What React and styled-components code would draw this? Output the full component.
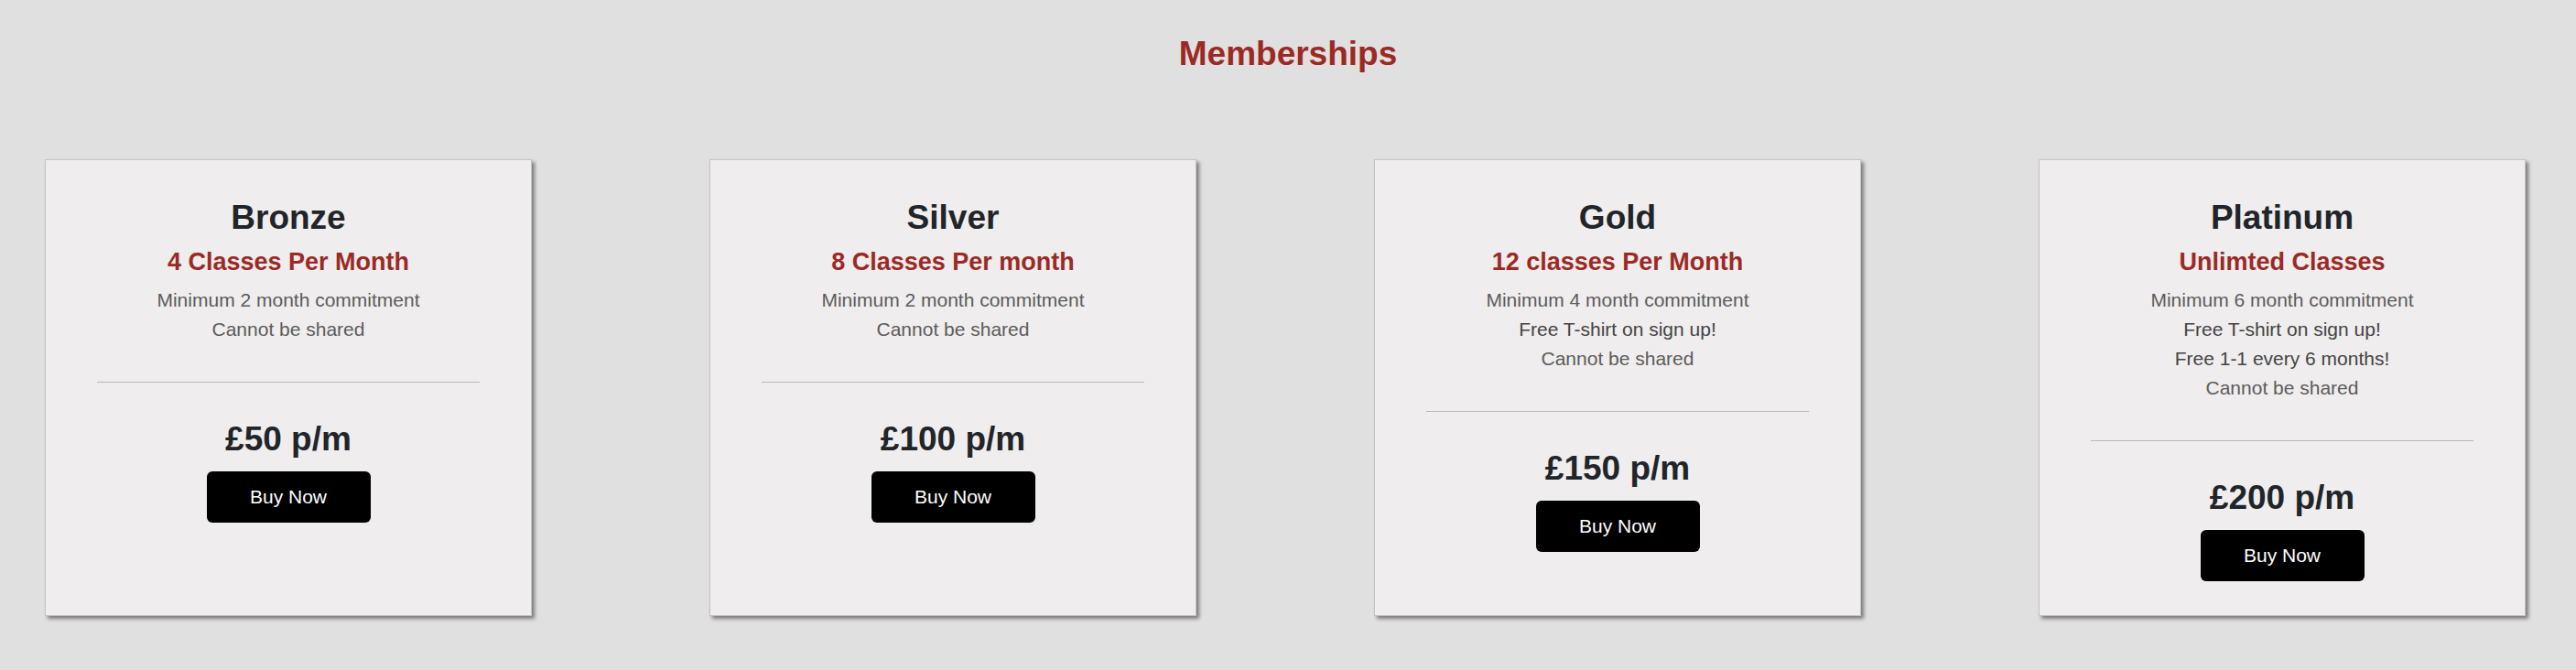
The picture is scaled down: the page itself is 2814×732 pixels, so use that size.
import React from "react";
import styled, { createGlobalStyle } from "styled-components";

const plans = [
  {
    name: "Bronze",
    classes: "4 Classes Per Month",
    perks: [
      { text: "Minimum 2 month commitment", light: true },
      { text: "Cannot be shared", light: true },
    ],
    price: "£50 p/m",
  },
  {
    name: "Silver",
    classes: "8 Classes Per month",
    perks: [
      { text: "Minimum 2 month commitment", light: true },
      { text: "Cannot be shared", light: true },
    ],
    price: "£100 p/m",
  },
  {
    name: "Gold",
    classes: "12 classes Per Month",
    perks: [
      { text: "Minimum 4 month commitment", light: true },
      { text: "Free T-shirt on sign up!" },
      { text: "Cannot be shared", light: true },
    ],
    price: "£150 p/m",
  },
  {
    name: "Platinum",
    classes: "Unlimted Classes",
    perks: [
      { text: "Minimum 6 month commitment", light: true },
      { text: "Free T-shirt on sign up!" },
      { text: "Free 1-1 every 6 months!" },
      { text: "Cannot be shared", light: true },
    ],
    price: "£200 p/m",
  },
];

function App() {
  return (
    <>
      <GlobalStyle />
      <Page>
        <Heading>Memberships</Heading>

        {/* membership cards */}
        <CardRow>
          {plans.map((plan) => (
            <Card key={plan.name}>
              <PlanName>{plan.name}</PlanName>
              <Classes>{plan.classes}</Classes>
              <Perks>
                {plan.perks.map((perk) => (
                  <Perk key={perk.text} $light={perk.light}>
                    {perk.text}
                  </Perk>
                ))}
              </Perks>
              <Divider />
              <Price>{plan.price}</Price>
              <BuyButton>Buy Now</BuyButton>
            </Card>
          ))}
        </CardRow>
      </Page>
    </>
  );
}

// Styles
const GlobalStyle = createGlobalStyle`
  html, body {
    margin: 0;
    padding: 0;
    background-color: #e0e0e0;
  }

  body {
    font-family: "Liberation Sans", Arial, Helvetica, sans-serif;
    min-height: 732px;
  }
`;

const Page = styled.section`
  padding-top: 38px;
  /* border: 1px solid; */
`;

const Heading = styled.h1`
  margin: 0;
  text-align: center;
  font-size: 37px;
  line-height: 42px;
  font-weight: 700;
  color: #9b2a25;
`;

const CardRow = styled.div`
  display: flex;
  justify-content: space-between;
  align-items: flex-start;
  padding: 0 55px 0 49px;
  margin-top: 94px;
`;

const Card = styled.article`
  box-sizing: border-box;
  width: 532px;
  height: 499px;
  background-color: #efeded;
  border: 1px solid #c4c4c4;
  box-shadow: 3px 3px 4px rgba(0, 0, 0, 0.45);
  padding-top: 42px;
  display: flex;
  flex-direction: column;
  align-items: center;
  text-align: center;
`;

const PlanName = styled.h2`
  margin: 0;
  font-size: 37px;
  line-height: 42px;
  font-weight: 700;
  color: #212529;
`;

const Classes = styled.h3`
  margin: 11px 0 0;
  font-size: 27px;
  line-height: 32px;
  font-weight: 700;
  color: #9b2a25;
`;

const Perks = styled.ul`
  list-style: none;
  margin: 10px 0 0;
  padding: 0;
`;

const Perk = styled.li`
  font-size: 21px;
  line-height: 32px;
  color: ${({ $light }) => ($light ? "#5c5c5c" : "#444444")};
`;

const Divider = styled.hr`
  width: 418px;
  margin: 41px 0 0;
  border: none;
  border-top: 1px solid #b8b8b8;
`;

const Price = styled.p`
  margin: 41px 0 0;
  font-size: 37px;
  line-height: 42px;
  font-weight: 700;
  color: #212529;
`;

const BuyButton = styled.button`
  margin-top: 14px;
  width: 179px;
  height: 56px;
  border: none;
  border-radius: 6px;
  background-color: #000;
  color: #fff;
  font-family: inherit;
  font-size: 21px;
  cursor: pointer;
`;

export default App;
